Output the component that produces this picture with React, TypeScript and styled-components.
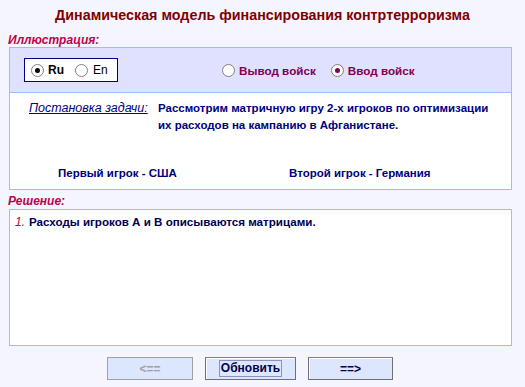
import React from "react";
import styled, { createGlobalStyle } from "styled-components";

const Global = createGlobalStyle`
  html, body { margin: 0; padding: 0; background: #f5f5ff; }
  body { font-family: "Liberation Sans", Arial, sans-serif; width: 525px; height: 387px; overflow: hidden; }
`;

const Page = styled.div`
  width: 525px;
  height: 387px;
  display: flex;
  flex-direction: column;
  box-sizing: border-box;
`;

const Title = styled.h1`
  margin: 0;
  height: 29px;
  display: flex;
  align-items: center;
  justify-content: center;
  font-size: 14.3px;
  font-weight: bold;
  color: #800000;
`;

const SectionLabel = styled.div`
  margin: 0 0 0 8px;
  height: 18px;
  display: flex;
  align-items: flex-end;
  font-size: 12px;
  font-weight: bold;
  font-style: italic;
  color: #c0004a;
  line-height: 14px;
`;

const Panel = styled.div`
  margin-left: 9px;
  width: 503px;
  box-sizing: border-box;
  border: 1px solid #9fbcff;
  display: flex;
  flex-direction: column;
`;

const ControlBar = styled.div`
  height: 45px;
  background: #e0e0ff;
  border-bottom: 1px solid #9fbcff;
  box-sizing: border-box;
  display: flex;
  align-items: center;
  padding-left: 14px;
`;

const LangBox = styled.div`
  width: 94px;
  height: 24px;
  box-sizing: border-box;
  border: 1px solid #000080;
  background: #ffffff;
  display: flex;
  align-items: center;
  padding-left: 6px;
`;

const RadioItem = styled.label<{ $gapAfter?: number; $gap?: number }>`
  display: flex;
  align-items: center;
  gap: ${(p) => p.$gap ?? 4}px;
  margin-right: ${(p) => p.$gapAfter ?? 0}px;
  font-size: 12px;
  cursor: default;
`;

const RadioCircle = styled.span<{ $on: boolean; $dot: string }>`
  width: 13px;
  height: 13px;
  box-sizing: border-box;
  border-radius: 50%;
  border: 1px solid #808080;
  background: #ffffff;
  display: inline-flex;
  align-items: center;
  justify-content: center;
  &::after {
    content: "";
    width: 5px;
    height: 5px;
    border-radius: 50%;
    background: ${(p) => (p.$on ? p.$dot : "transparent")};
  }
`;

const LangText = styled.span<{ $bold?: boolean }>`
  color: #000000;
  font-weight: ${(p) => (p.$bold ? "bold" : "normal")};
  font-size: 12px;
`;

const ModeGroup = styled.div`
  margin-left: 104px;
  display: flex;
  align-items: center;
`;

const ModeText = styled.span`
  color: #800050;
  font-weight: bold;
  font-size: 11.7px;
`;

const TaskArea = styled.div`
  background: #ffffff;
  height: 96px;
  display: flex;
  flex-direction: column;
  padding-top: 7px;
  box-sizing: border-box;
`;

const TaskRow = styled.div`
  display: flex;
  align-items: flex-start;
  padding-left: 19px;
`;

const TaskLabel = styled.span`
  font-style: italic;
  text-decoration: underline;
  color: #000080;
  font-size: 12.5px;
  line-height: 17px;
  width: 129px;
  flex: none;
`;

const TaskText = styled.div`
  font-weight: bold;
  color: #000080;
  font-size: 11.5px;
  line-height: 17px;
  width: 345px;
`;

const PlayersRow = styled.div`
  display: grid;
  grid-template-columns: 231px auto;
  padding-left: 48px;
  margin-top: 31px;
  font-weight: bold;
  color: #000080;
  font-size: 11.5px;
  line-height: 17px;
`;

const SolutionBox = styled.div`
  margin-left: 9px;
  margin-top: 1px;
  width: 503px;
  height: 137px;
  box-sizing: border-box;
  border: 1px solid #9fbcff;
  background: #ffffff;
  padding: 3px 0 0 5px;
  font-size: 12px;
  line-height: 17px;
`;

const StepNum = styled.span`
  font-style: italic;
  color: #c0004a;
  margin-right: 4px;
  font-size: 12px;
`;

const StepText = styled.span`
  font-weight: bold;
  color: #000050;
  font-size: 11.6px;
`;

const ButtonRow = styled.div`
  margin-top: 11px;
  display: flex;
  padding-left: 107px;
  gap: 12px;
`;

const NavButton = styled.button<{ $w: number; $disabled?: boolean }>`
  width: ${(p) => p.$w}px;
  height: 23px;
  box-sizing: border-box;
  background: #dde6ff;
  border: 1px solid ${(p) => (p.$disabled ? "#a0a0a0" : "#707070")};
  border-top-color: ${(p) => (p.$disabled ? "#a0a0a0" : "#808080")};
  box-shadow: ${(p) => (p.$disabled ? "none" : "inset 1px 1px 0 #ffffff")};
  font-family: "Liberation Sans", Arial, sans-serif;
  font-weight: bold;
  font-size: 12px;
  color: ${(p) => (p.$disabled ? "#a0a0a0" : "#000050")};
  padding: 0;
  display: flex;
  align-items: center;
  justify-content: center;
`;

const FocusText = styled.span`
  border: 1px solid #9090c0;
  padding: 1px 1px;
  line-height: 13px;
`;

export default function App() {
  return (
    <Page>
      <Global />
      <Title>Динамическая модель финансирования контртерроризма</Title>
      <SectionLabel>Иллюстрация:</SectionLabel>
      <Panel>
        <ControlBar>
          <LangBox>
            <RadioItem $gapAfter={11}>
              <RadioCircle $on={true} $dot="#000000" />
              <LangText $bold>Ru</LangText>
            </RadioItem>
            <RadioItem $gap={5}>
              <RadioCircle $on={false} $dot="#000000" />
              <LangText>En</LangText>
            </RadioItem>
          </LangBox>
          <ModeGroup>
            <RadioItem $gapAfter={15}>
              <RadioCircle $on={false} $dot="#800050" />
              <ModeText>Вывод войск</ModeText>
            </RadioItem>
            <RadioItem>
              <RadioCircle $on={true} $dot="#800050" />
              <ModeText>Ввод войск</ModeText>
            </RadioItem>
          </ModeGroup>
        </ControlBar>
        <TaskArea>
          <TaskRow>
            <TaskLabel>Постановка задачи:</TaskLabel>
            <TaskText>
              Рассмотрим матричную игру 2-х игроков по оптимизации их расходов на кампанию в Афганистане.
            </TaskText>
          </TaskRow>
          <PlayersRow>
            <span>Первый игрок - США</span>
            <span>Второй игрок - Германия</span>
          </PlayersRow>
        </TaskArea>
      </Panel>
      <SectionLabel>Решение:</SectionLabel>
      <SolutionBox>
        <StepNum>1.</StepNum>
        <StepText>Расходы игроков А и В описываются матрицами.</StepText>
      </SolutionBox>
      <ButtonRow>
        <NavButton $w={86} $disabled disabled>
          &lt;==
        </NavButton>
        <NavButton $w={91}>
          <FocusText>Обновить</FocusText>
        </NavButton>
        <NavButton $w={85}>==&gt;</NavButton>
      </ButtonRow>
    </Page>
  );
}
